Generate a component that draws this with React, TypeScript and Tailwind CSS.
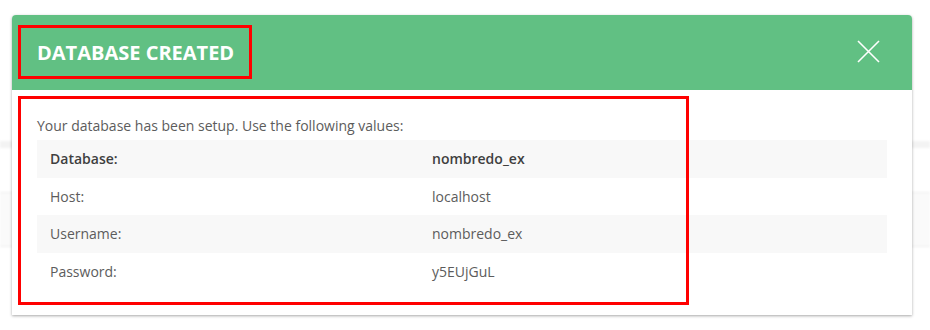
import React from "react";

const rows = [
  { label: "Database:", value: "nombredo_ex", strong: true },
  { label: "Host:", value: "localhost" },
  { label: "Username:", value: "nombredo_ex" },
  { label: "Password:", value: "y5EUjGuL" },
];

export default function App() {
  return (
    <div
      className="relative w-[930px] h-[330px] overflow-hidden bg-white"
      style={{ fontFamily: "'Open Sans', 'Liberation Sans', sans-serif" }}
    >
      {/* page behind the dialog */}
      <div className="flex flex-col pt-[141px] blur-[1px]">
        <div className="h-[7px] bg-[#f3f3f3]" />
        <div className="h-[44px]" />
        <div className="h-[55px] bg-[#fafafa] border-y border-[#eeeeee]" />
      </div>

      {/* dialog */}
      <div className="absolute left-[12px] top-[15px] w-[900px] h-[300px] bg-white rounded-t-[4px] shadow-[0_1px_3px_rgba(0,0,0,0.35)]">
        <div className="flex h-[75px] items-center justify-between rounded-t-[4px] bg-[#61c083] pl-[25px] pr-[32px]">
          <h2 className="text-[20px] font-bold text-white">DATABASE CREATED</h2>
          <svg width="23" height="23" viewBox="0 0 23 23" className="mb-[2px]">
            <path d="M1 1L22 22M22 1L1 22" stroke="white" strokeWidth="1.6" fill="none" />
          </svg>
        </div>

        <div className="px-[25px] pt-[26px] text-[14px] text-[#5c5c5c]">
          <p className="leading-[20px] mb-[4px]">Your database has been setup. Use the following values:</p>
          <div className="flex flex-col">
            {rows.map((row, i) => (
              <div
                key={row.label}
                className={`flex h-[37.5px] items-center ${i % 2 === 0 ? "bg-[#f8f8f8]" : ""} ${
                  row.strong ? "font-semibold text-[#3f3f3f]" : ""
                }`}
              >
                <span className="w-[382px] pl-[13px]">{row.label}</span>
                <span className="pl-[13px]">{row.value}</span>
              </div>
            ))}
          </div>
        </div>

        {/* highlight annotations */}
        <div className="absolute left-[6px] top-[10px] w-[234px] h-[54px] border-[3px] border-[#ff0000]" />
        <div className="absolute left-[6px] top-[81px] w-[671px] h-[209px] border-[3px] border-[#ff0000]" />
      </div>
    </div>
  );
}
